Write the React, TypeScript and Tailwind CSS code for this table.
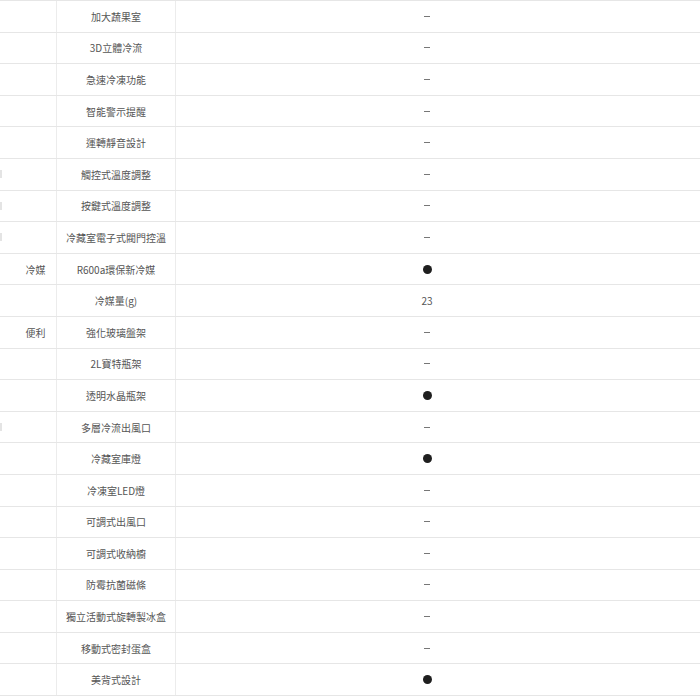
type Row = { cat?: string; spill?: boolean; name: string; value: "-" | "dot" | string };

const rows: Row[] = [
  { name: "加大蔬果室", value: "-" },
  { name: "3D立體冷流", value: "-" },
  { name: "急速冷凍功能", value: "-" },
  { name: "智能警示提醒", value: "-" },
  { name: "運轉靜音設計", value: "-" },
  { name: "觸控式溫度調整", value: "-", spill: true },
  { name: "按鍵式溫度調整", value: "-", spill: true },
  { name: "冷藏室電子式閥門控溫", value: "-", spill: true },
  { cat: "冷媒", name: "R600a環保新冷媒", value: "dot" },
  { name: "冷媒量(g)", value: "23" },
  { cat: "便利", name: "強化玻璃盤架", value: "-" },
  { name: "2L寶特瓶架", value: "-" },
  { name: "透明水晶瓶架", value: "dot" },
  { name: "多層冷流出風口", value: "-", spill: true },
  { name: "冷藏室庫燈", value: "dot" },
  { name: "冷凍室LED燈", value: "-" },
  { name: "可調式出風口", value: "-" },
  { name: "可調式收納櫥", value: "-" },
  { name: "防霉抗菌磁條", value: "-" },
  { name: "獨立活動式旋轉製冰盒", value: "-" },
  { name: "移動式密封蛋盒", value: "-" },
  { name: "美背式設計", value: "dot" },
];

function Value({ v }: { v: string }) {
  if (v === "dot") return <span className="block size-[9px] rounded-full bg-[#1f1f1f]" />;
  if (v === "-") return <span className="block h-px w-[6px] bg-[#777]" />;
  return <span>{v}</span>;
}

export default function App() {
  return (
    <div
      className="h-[700px] w-[700px] overflow-hidden bg-white text-[10px] text-[#555]"
      style={{ fontFamily: '"Noto Sans CJK TC", "Noto Sans", sans-serif' }}
    >
      <div className="border-b border-[#e6e6e6]">
        {rows.map((r, i) => (
          <div key={i} className="flex h-[31.6px] border-t border-[#e6e6e6]">
            <div className="relative flex w-[57px] shrink-0 items-center justify-center border-r border-[#ececec] pl-[15px]">
              {/* sliver of the clipped column to the left */}
              {r.spill && (
                <span className="absolute left-0 top-1/2 h-[8px] w-[2px] -translate-y-1/2 bg-[#e4e4e4]" />
              )}
              {r.cat}
            </div>
            <div className="flex w-[119px] shrink-0 items-center justify-center border-r border-[#ececec] whitespace-nowrap">
              {r.name}
            </div>
            <div className="flex flex-1 items-center justify-center pr-[22px]">
              <Value v={r.value} />
            </div>
          </div>
        ))}
      </div>
    </div>
  );
}
